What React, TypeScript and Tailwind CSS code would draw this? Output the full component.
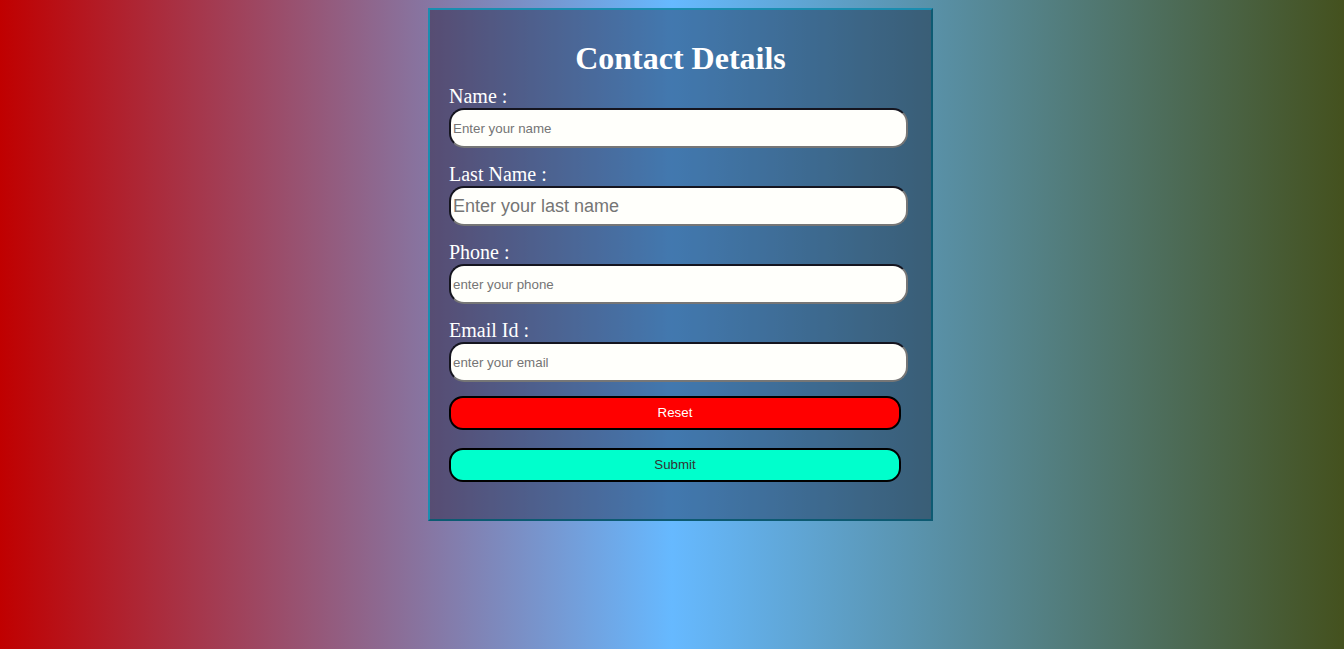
import React from "react";

export default function App() {
  const fields = [
    { label: "Name :", ph: "Enter your name", big: false },
    { label: "Last Name :", ph: "Enter your last name", big: true },
    { label: "Phone :", ph: "enter your phone", big: false },
    { label: "Email Id :", ph: "enter your email", big: false },
  ];
  return (
    <div className="min-h-screen w-full bg-[linear-gradient(to_right,#c00000,#66b9ff_50%,#44511e)] pt-[8px]">
      <div className="ml-[428px] w-[505px] h-[513px] border-2 border-t-[#1b8db0] border-l-[#1b8db0] border-b-[#0d5a72] border-r-[#0d5a72] bg-[rgba(0,0,25,0.35)] px-[19px] pt-[30px]">
        <h1 className="text-center text-white font-bold text-[32px] leading-[37px] font-['Liberation_Serif',serif] mb-[8px]">
          Contact Details
        </h1>
        <div className="flex flex-col gap-[15px]">
          {fields.map((f) => (
            <div key={f.label} className="flex flex-col">
              <label className="text-white text-[20px] leading-[23px] font-['Liberation_Serif',serif]">
                {f.label}
              </label>
              <input
                placeholder={f.ph}
                className={
                  "w-[459px] h-[40px] rounded-[15px] border-2 border-t-[#15151f] border-l-[#15151f] border-b-[#767676] border-r-[#767676] bg-[#fffffb] px-[2px] outline-none font-['Liberation_Sans',Arial,sans-serif] placeholder:text-[#757575] " +
                  (f.big ? "text-[18px]" : "text-[13.33px]")
                }
              />
            </div>
          ))}
        </div>
        <button className="mt-[14px] block w-[452px] h-[34px] rounded-[14px] border-2 border-black bg-[#ff0000] text-white text-[13.33px] font-['Liberation_Sans',Arial,sans-serif]">
          Reset
        </button>
        <button className="mt-[18px] block w-[452px] h-[34px] rounded-[14px] border-2 border-black bg-[#00ffcc] text-[#333333] text-[13.33px] font-['Liberation_Sans',Arial,sans-serif]">
          Submit
        </button>
      </div>
    </div>
  );
}
